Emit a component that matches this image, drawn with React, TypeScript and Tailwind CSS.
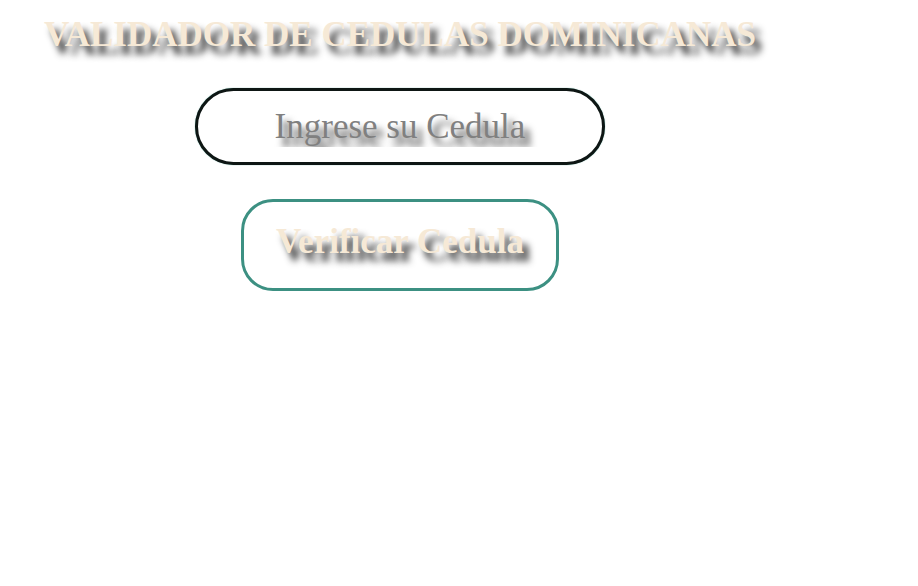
import { useState } from "react";

export default function App() {
    const [cedula, setCedula] = useState("");

    return (
        <main className="w-[800px] flex flex-col items-center pt-[15px] font-['Liberation_Serif',serif]">
            <h1 className="text-[35px] leading-[39px] font-bold text-[#f6e9d6] [text-shadow:6px_8px_7px_rgba(0,0,0,0.85)]">
                VALIDADOR DE CEDULAS DOMINICANAS
            </h1>

            <input
                type="text"
                value={cedula}
                onChange={(e) => setCedula(e.target.value)}
                placeholder="Ingrese su Cedula"
                className="mt-[34px] w-[410px] h-[77px] rounded-full border-[3px] border-[#0e1614] bg-white text-center text-[35px] text-[#808080] outline-none shadow-[0_0_1px_#3a8f80] placeholder:text-[#808080] placeholder:[text-shadow:6px_8px_7px_rgba(0,0,0,0.8)]"
            />

            <button
                type="button"
                className="mt-[34px] w-[318px] h-[92px] pb-[6px] rounded-[32px] border-[3px] border-[#3c9082] bg-white text-[35px] font-bold text-[#f6e9d6] [text-shadow:6px_8px_7px_rgba(0,0,0,0.85)]"
            >
                Verificar Cedula
            </button>
        </main>
    )
}
